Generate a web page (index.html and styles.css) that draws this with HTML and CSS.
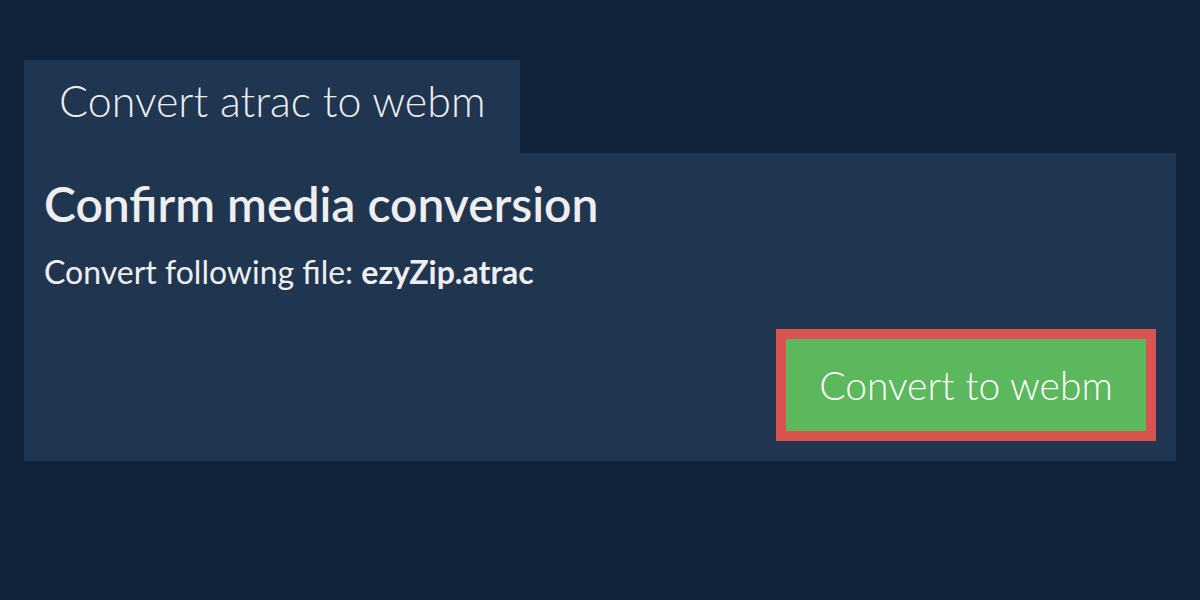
FILE: index.html
```html
<!DOCTYPE html>
<html>
<head>
<meta charset="utf-8">
<link rel="stylesheet" href="styles.css">
</head>
<body>
<div class="page">
  <div class="tab">Convert atrac to webm</div>
  <div class="panel">
    <h1 class="title">Confirm media conversion</h1>
    <p class="file">Convert following file: <b>ezyZip.atrac</b></p>
    <div class="actions">
      <button class="convert">Convert to webm</button>
    </div>
  </div>
</div>
</body>
</html>
```
FILE: styles.css
```css
html, body {
  margin: 0;
  height: 100%;
  background: #10233a;
}
body {
  font-family: Lato, "Open Sans", sans-serif;
  color: #eeeeee;
}
.page {
  padding: 60px 24px 0 24px;
}
.tab {
  display: inline-block;
  box-sizing: border-box;
  width: 496px;
  height: 93px;
  padding: 0 0 0 35px;
  background: #203550;
  font-size: 43px;
  font-weight: 300;
  line-height: 82px;
  vertical-align: top;
}
.panel {
  background: #203550;
  padding: 22px 20px 20px 20px;
}
.title {
  margin: 0;
  font-size: 48px;
  font-weight: 600;
  line-height: 58px;
}
.file {
  margin: 20px 0 0 0;
  font-size: 32px;
  line-height: 38px;
}
.file b {
  font-weight: 700;
}
.actions {
  display: flex;
  justify-content: flex-end;
  margin-top: 38px;
}
.convert {
  width: 380px;
  height: 112px;
  box-sizing: border-box;
  background: #5cb85c;
  border: 10px solid #d9534f;
  color: #ffffff;
  font-family: Lato, sans-serif;
  font-size: 39px;
  font-weight: 300;
  padding: 0;
  margin: 0;
}
```
